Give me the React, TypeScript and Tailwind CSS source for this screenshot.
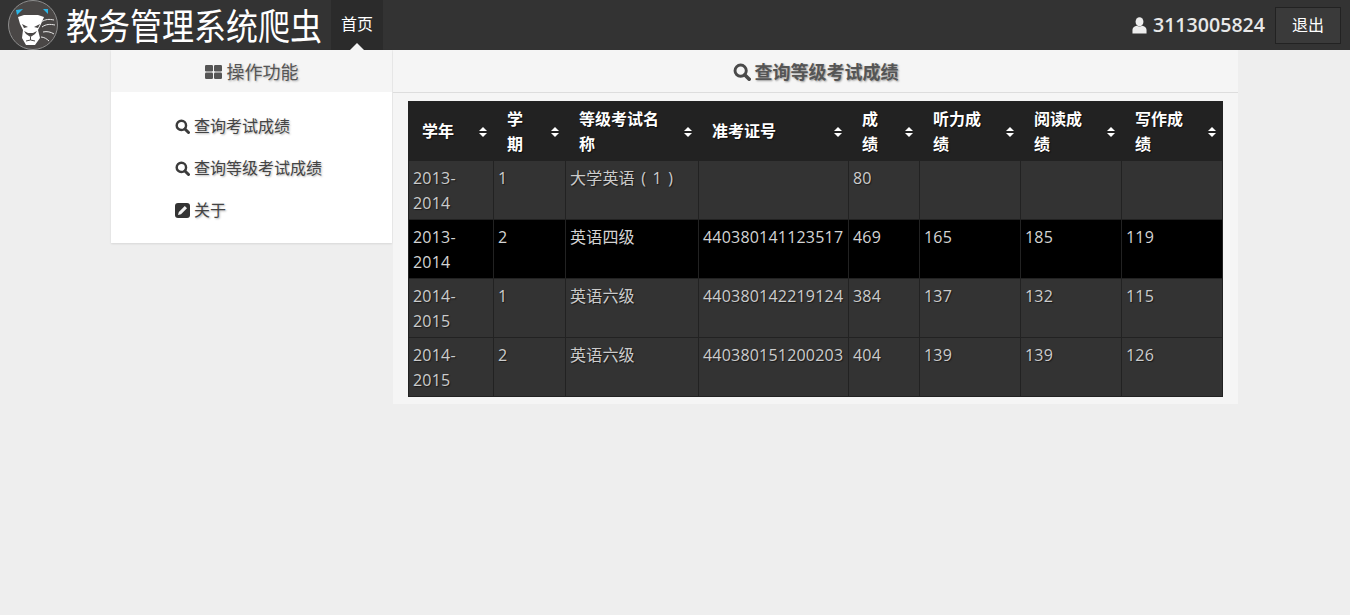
import React from "react";

const CJK = "font-['Open_Sans','Noto_Sans_CJK_SC',sans-serif]";

function Search({ className = "" }: { className?: string }) {
  return (
    <svg viewBox="0 0 16 16" className={className} fill="none" stroke="currentColor">
      <circle cx="6.8" cy="6.8" r="5" strokeWidth="2.6" />
      <path d="M10.6 10.6 14.4 14.4" strokeWidth="3.2" strokeLinecap="round" />
    </svg>
  );
}

function Grid2() {
  return (
    <svg viewBox="0 0 17 14" className="w-[17px] h-[14px]" fill="currentColor">
      <rect x="0" y="0" width="8" height="6.5" rx="1.2" />
      <rect x="9" y="0" width="8" height="6.5" rx="1.2" />
      <rect x="0" y="7.5" width="8" height="6.5" rx="1.2" />
      <rect x="9" y="7.5" width="8" height="6.5" rx="1.2" />
    </svg>
  );
}

function EditIcon() {
  return (
    <svg viewBox="0 0 15 15" className="w-[15px] h-[15px]">
      <rect width="15" height="15" rx="3" fill="#333" />
      <path d="M3 12 L3.8 9 L9.8 3 L12 5.2 L6 11.2 Z" fill="#f2f2f2" />
    </svg>
  );
}

function UserIcon() {
  return (
    <svg viewBox="0 0 16 18" className="w-[15px] h-[17px]" fill="#eee">
      <ellipse cx="8" cy="5" rx="4.2" ry="4.8" />
      <path d="M0.5 17.5 V13.5 C0.5 11 3 10 5 9.3 C6.5 10.4 9.5 10.4 11 9.3 C13 10 15.5 11 15.5 13.5 V17.5 Z" />
    </svg>
  );
}

function Sort() {
  return (
    <svg viewBox="0 0 8 10" className="w-[8px] h-[10px] shrink-0" fill="#fff">
      <path d="M4 0 8 4H0Z" />
      <path d="M0 6H8L4 10Z" />
    </svg>
  );
}

function Logo() {
  return (
    <svg viewBox="0 0 50 50" className="w-[50px] h-[50px] shrink-0">
      <circle cx="25" cy="25" r="24.5" fill="#4a4746" stroke="#8d8d8d" strokeWidth="1" />
      <path d="M8 10 L15 9 L9 15Z" fill="#2bb7e8" />
      <path d="M35 9 L40 9 L40 14Z" fill="#2bb7e8" />
      <path d="M10 17 L16 15 H30 L36 17 L33 24 L30 30 L32 38 L27 45 H18 L14 38 L15 30 L12 24 Z" fill="#fff" />
      <path d="M14 24 L20 27 L16 28Z M32 24 L26 27 L30 28Z" fill="#4a4746" />
      <path d="M18 34 L22.5 37 L27 34 L29 31 L25 33 H20 L16 31Z" fill="#4a4746" />
      <path d="M22.5 37 V40 M18 41 L22.5 40 L27 41" stroke="#4a4746" strokeWidth="1" fill="none" />
      <path d="M33 22 C38 19 41 19 46 20 M34 27 C38 24 42 24 47 25 M35 32 C39 31 43 32 46 34 M33 37 C36 37 39 39 41 41" stroke="#e9e9e9" strokeWidth="1" fill="none" />
    </svg>
  );
}

const heads = [
  { w: "w-[85px]", t: "学年" },
  { w: "w-[72px]", t: "学期" },
  { w: "w-[133px]", t: "等级考试名称" },
  { w: "w-[150px]", t: "准考证号" },
  { w: "w-[71px]", t: "成绩" },
  { w: "w-[101px]", t: "听力成绩" },
  { w: "w-[101px]", t: "阅读成绩" },
  { w: "w-[101px]", t: "写作成绩" },
];

const rows = [
  ["2013-2014", "1", "大学英语 ( 1 )", "", "80", "", "", ""],
  ["2013-2014", "2", "英语四级", "440380141123517", "469", "165", "185", "119"],
  ["2014-2015", "1", "英语六级", "440380142219124", "384", "137", "132", "115"],
  ["2014-2015", "2", "英语六级", "440380151200203", "404", "139", "139", "126"],
];

export default function App() {
  return (
    <div className={`min-h-[615px] bg-[#eeeeee] text-[16px] leading-[25px] ${CJK}`}>
      <nav className="h-[50px] bg-[#333333] flex items-stretch">
        <div className="flex items-center pl-[8px] w-[331px] shrink-0">
          <Logo />
          <span className="ml-[8px] -mt-[2px] h-[40px] flex items-center text-[32px] leading-[40px] text-white whitespace-nowrap scale-y-[1.15] font-['Noto_Sans_CJK_SC',sans-serif] font-normal">
            教务管理系统爬虫
          </span>
        </div>
        <div className="relative w-[52px] bg-[#2b2b2b] flex items-center justify-center pb-[2px] text-white">
          首页
          <span className="absolute bottom-0 left-[19px] w-0 h-0 border-x-[7px] border-x-transparent border-b-[7px] border-b-[#f5f5f5]" />
        </div>
        <div className="ml-auto flex items-center pr-[9px]">
          <UserIcon />
          <span className="ml-[6px] text-[19.6px] font-semibold text-[#e8e8e8] pb-[2px]">3113005824</span>
          <button className="ml-[10px] w-[66px] h-[37px] bg-[#3a3a3a] border border-[#222222] text-white text-[16px] pt-[1px]">
            退出
          </button>
        </div>
      </nav>
      <main className="ml-[111px] w-[1127px] flex gap-[1px] items-start text-[#333333]">
        <aside className="w-[281px] bg-white shadow-[0_1px_2px_rgba(0,0,0,0.1)] h-[193px]">
          <div className="h-[42px] bg-[#f5f5f5] flex items-center justify-center gap-[5px] text-[18px] text-[#555555] pt-[2px] [text-shadow:1px_1px_2px_rgba(0,0,0,0.3)]">
            <Grid2 />
            <span>操作功能</span>
          </div>
          <ul className="pl-[64px] pt-[13px] flex flex-col text-[#444444] [text-shadow:1px_1px_2px_rgba(0,0,0,0.3)]">
            <li className="h-[42px] flex items-center gap-[4px]">
              <Search className="w-[15px] h-[15px] text-[#3c3c3c]" />
              查询考试成绩
            </li>
            <li className="h-[42px] flex items-center gap-[4px]">
              <Search className="w-[15px] h-[15px] text-[#3c3c3c]" />
              查询等级考试成绩
            </li>
            <li className="h-[42px] flex items-center gap-[4px]">
              <EditIcon />
              关于
            </li>
          </ul>
        </aside>
        <section className="w-[845px] bg-[#f5f5f5] h-[354px]">
          <div className="h-[43px] border-b border-[#dddddd] flex items-center justify-center gap-[4px] text-[18px] font-bold text-[#555555] pt-[2px] [text-shadow:1px_1px_2px_rgba(0,0,0,0.4)]">
            <Search className="w-[18px] h-[18px] text-[#4a4a4a]" />
            <span>查询等级考试成绩</span>
          </div>
          <div className="pl-[15px] pt-[8px]">
            <table className="w-[814px] table-fixed border-collapse">
              <thead>
                <tr className="h-[59px] bg-[#222222] text-white">
                  {heads.map((h) => (
                    <th key={h.t} className={`${h.w} p-0 pt-[1px] border border-[#222222] font-bold text-left [text-shadow:1px_1px_1px_rgba(0,0,0,0.6)]`}>
                      <div className="flex items-center pl-[13px] pr-[6px]">
                        <span className="flex-1 min-w-0 pr-[13px] break-all">{h.t}</span>
                        <Sort />
                      </div>
                    </th>
                  ))}
                </tr>
              </thead>
              <tbody>
                {rows.map((r, i) => (
                  <tr key={i} className={`h-[59px] ${i === 1 ? "bg-black text-[#d4d4d4]" : "bg-[#333333] text-[#cccccc]"}`}>
                    {r.map((c, j) => (
                      <td
                        key={j}
                        className="border border-[#222222] px-[4px] pt-[5px] align-top overflow-hidden tracking-[0.2px] [word-spacing:2px] [text-shadow:1px_1px_1px_rgba(0,0,0,0.5)]"
                      >
                        {j === 0 ? (
                          <>
                            {c.slice(0, 5)}
                            <br />
                            {c.slice(5)}
                          </>
                        ) : (
                          c
                        )}
                      </td>
                    ))}
                  </tr>
                ))}
              </tbody>
            </table>
          </div>
        </section>
      </main>
    </div>
  );
}
